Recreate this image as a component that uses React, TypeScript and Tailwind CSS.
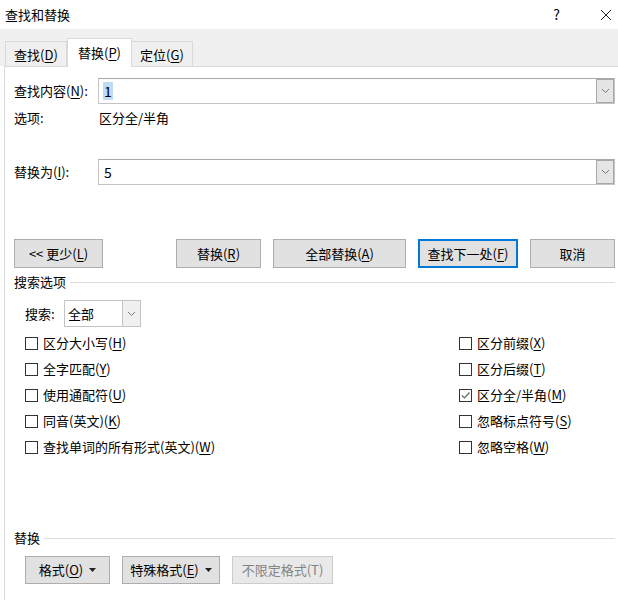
import type { ReactNode } from "react";

const font = { fontFamily: "'Noto Sans CJK SC', 'Noto Sans', sans-serif" };

function Key({ k }: { k: string }) {
  return <u className="underline-offset-2">{k}</u>;
}

function Btn({
  children,
  w,
  primary,
  disabled,
}: {
  children: ReactNode;
  w: string;
  primary?: boolean;
  disabled?: boolean;
}) {
  return (
    <button
      type="button"
      className={`${w} flex h-full items-center justify-center bg-[#e1e1e1] text-[13px] ${
        primary ? "border-2 border-[#0078d7]" : "border border-[#adadad]"
      } ${disabled ? "text-[#838383] border-[#cccccc] bg-[#e9e9e9]" : "text-black"}`}
    >
      {children}
    </button>
  );
}

function Caret() {
  return (
    <svg width="7" height="4" viewBox="0 0 7 4" className="ml-[6px]">
      <path d="M0 0 L7 0 L3.5 4 Z" fill="#222" />
    </svg>
  );
}

function Combo({ value, selected }: { value: string; selected?: boolean }) {
  return (
    <div className="flex h-[26px] flex-1 border border-[#c4c4c4] border-t-[#a9a9a9] bg-white">
      <div className="flex flex-1 items-center pl-[4px] text-[14px]">
        <span className={selected ? "bg-[#bfdcf5] px-px leading-[18px]" : "px-px"}>{value}</span>
      </div>
      <div className="flex w-[18px] items-center justify-center border border-[#a8a8a8] bg-[#e5e5e5]">
        <svg width="9" height="6" viewBox="0 0 9 6">
          <path d="M1 1 L4.5 4.5 L8 1" fill="none" stroke="#777" strokeWidth="1" />
        </svg>
      </div>
    </div>
  );
}

function Check({ label, k, checked }: { label: string; k: string; checked?: boolean }) {
  return (
    <div className="flex h-[26px] items-center gap-[5px] text-[13px]">
      <div className="flex h-[13px] w-[13px] items-center justify-center border border-[#333333] bg-white">
        {checked && (
          <svg width="11" height="11" viewBox="0 0 11 11">
            <path d="M2 5.5 L4.5 8 L9.5 2.5" fill="none" stroke="#666" strokeWidth="1.2" />
          </svg>
        )}
      </div>
      <span>
        {label}(<Key k={k} />)
      </span>
    </div>
  );
}

function Section({ title }: { title: string }) {
  return (
    <div className="flex h-[16px] items-center gap-[4px] text-[13px]">
      <span>{title}</span>
      <div className="h-px flex-1 bg-[#dcdcdc]" />
    </div>
  );
}

const leftChecks = [
  { label: "区分大小写", k: "H" },
  { label: "全字匹配", k: "Y" },
  { label: "使用通配符", k: "U" },
  { label: "同音(英文)", k: "K" },
  { label: "查找单词的所有形式(英文)", k: "W" },
];

const rightChecks = [
  { label: "区分前缀", k: "X" },
  { label: "区分后缀", k: "T" },
  { label: "区分全/半角", k: "M", checked: true },
  { label: "忽略标点符号", k: "S" },
  { label: "忽略空格", k: "W" },
];

export default function App() {
  return (
    <div className="flex h-[600px] w-[618px] flex-col overflow-hidden bg-white text-black" style={font}>
      {/* title bar */}
      <div className="flex h-[29px] items-center pl-[5px] text-[13px]">
        <span>查找和替换</span>
        <span className="ml-auto mr-[40px] text-[14px]">?</span>
        <svg width="12" height="12" viewBox="0 0 12 12" className="mr-[6px]">
          <path d="M1 1 L11 11 M11 1 L1 11" stroke="#222" strokeWidth="1" />
        </svg>
      </div>

      {/* tab strip */}
      <div className="flex h-[37px] items-end bg-[#f0f0f0] pl-[5px]">
        <div className="-mb-px flex h-[26px] w-[62px] items-center justify-center border border-b-0 border-[#d9d9d9] bg-[#f0f0f0] text-[13px]">
          查找(<Key k="D" />)
        </div>
        <div className="relative z-10 -mb-px flex h-[29px] w-[65px] items-center justify-center border border-b-0 border-[#d9d9d9] bg-white text-[13px]">
          替换(<Key k="P" />)
        </div>
        <div className="-mb-px flex h-[26px] w-[61px] items-center justify-center border border-b-0 border-l-0 border-[#d9d9d9] bg-[#f0f0f0] text-[13px]">
          定位(<Key k="G" />)
        </div>
      </div>

      {/* panel */}
      <div className="ml-[4px] flex flex-1 flex-col border-l border-t border-[#d9d9d9] bg-white pl-[9px] pr-[3px] text-[13px]">
        <div className="mt-[11px] flex items-center">
          <span className="w-[84px]">
            查找内容(<Key k="N" />):
          </span>
          <Combo value="1" selected />
        </div>
        <div className="mt-[4px] flex h-[20px] items-center">
          <span className="w-[85px]">选项:</span>
          <span>区分全/半角</span>
        </div>
        <div className="mt-[31px] flex items-center">
          <span className="w-[84px]">
            替换为(<Key k="I" />):
          </span>
          <Combo value="5" />
        </div>

        <div className="mt-[54px] flex h-[29px]">
          <Btn w="w-[89px]">
            &lt;&lt; 更少(<Key k="L" />)
          </Btn>
          <div className="ml-auto flex h-full gap-3">
            <Btn w="w-[85px]">
              替换(<Key k="R" />)
            </Btn>
            <Btn w="w-[133px]">
              全部替换(<Key k="A" />)
            </Btn>
            <Btn w="w-[100px]" primary>
              查找下一处(<Key k="F" />)
            </Btn>
            <Btn w="w-[85px]">取消</Btn>
          </div>
        </div>

        <div className="mt-[6px]">
          <Section title="搜索选项" />
        </div>

        <div className="mt-[10px] flex items-center pl-[11px]">
          <span className="w-[39px]">搜索:</span>
          <div className="flex h-[27px] w-[77px] border border-[#c4c4c4] bg-white">
            <div className="flex flex-1 items-center pl-[3px]">全部</div>
            <div className="flex w-[18px] items-center justify-center border-l border-[#c4c4c4] bg-[#f0f0f0]">
              <svg width="9" height="6" viewBox="0 0 9 6">
                <path d="M1 1 L4.5 4.5 L8 1" fill="none" stroke="#777" strokeWidth="1" />
              </svg>
            </div>
          </div>
        </div>

        <div className="mt-[3px] grid grid-cols-[434px_1fr] pl-[11px]">
          <div className="flex flex-col">
            {leftChecks.map((c) => (
              <Check key={c.label} label={c.label} k={c.k} />
            ))}
          </div>
          <div className="flex flex-col">
            {rightChecks.map((c) => (
              <Check key={c.label} label={c.label} k={c.k} checked={c.checked} />
            ))}
          </div>
        </div>

        <div className="mt-[70px]">
          <Section title="替换" />
        </div>

        <div className="mt-[10px] flex h-[28px] gap-3 pl-[11px]">
          <Btn w="w-[85px]">
            <span>
              格式(<Key k="O" />)
            </span>
            <Caret />
          </Btn>
          <Btn w="w-[98px]">
            <span>
              特殊格式(<Key k="E" />)
            </span>
            <Caret />
          </Btn>
          <Btn w="w-[101px]" disabled>
            不限定格式(T)
          </Btn>
        </div>
      </div>
    </div>
  );
}
